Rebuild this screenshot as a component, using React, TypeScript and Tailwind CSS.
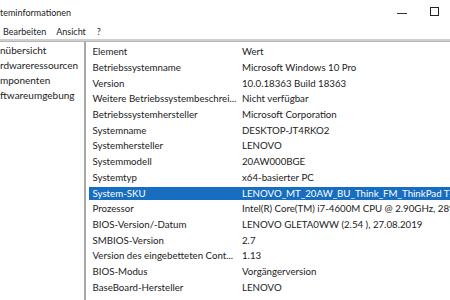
import React from "react";

const rows: [string, string][] = [
  ["Betriebssystemname", "Microsoft Windows 10 Pro"],
  ["Version", "10.0.18363 Build 18363"],
  ["Weitere Betriebssystembeschrei...", "Nicht verfügbar"],
  ["Betriebssystemhersteller", "Microsoft Corporation"],
  ["Systemname", "DESKTOP-JT4RKO2"],
  ["Systemhersteller", "LENOVO"],
  ["Systemmodell", "20AW000BGE"],
  ["Systemtyp", "x64-basierter PC"],
  ["System-SKU", "LENOVO_MT_20AW_BU_Think_FM_ThinkPad T440p"],
  ["Prozessor", "Intel(R) Core(TM) i7-4600M CPU @ 2.90GHz, 2894 MHz"],
  ["BIOS-Version/-Datum", "LENOVO GLETA0WW (2.54 ), 27.08.2019"],
  ["SMBIOS-Version", "2.7"],
  ["Version des eingebetteten Cont...", "1.13"],
  ["BIOS-Modus", "Vorgängerversion"],
  ["BaseBoard-Hersteller", "LENOVO"],
];

export default function App() {
  return (
    <div
      className="w-[450px] h-[300px] overflow-hidden bg-white text-[#222] text-[9.7px] leading-[13px] flex flex-col"
      style={{ fontFamily: 'Lato, "Open Sans", sans-serif' }}
    >
      {/* Title bar */}
      <div className="h-[24px] flex items-center shrink-0 text-[9px]">
        <div className="whitespace-nowrap pt-[1px]">teminformationen</div>
        <div className="flex-1" />
        <div className="w-[10px] h-px bg-[#333] mr-[23px] mt-[2px]" />
        <div className="w-[9px] h-[9px] border border-[#222] mr-[11px] mb-[2px]" />
      </div>
      {/* Menu bar */}
      <div className="h-[15px] flex items-center pl-[3px] shrink-0 text-[9px]">
        <span>Bearbeiten</span>
        <span className="ml-[10px]">Ansicht</span>
        <span className="ml-[11px]">?</span>
      </div>
      {/* Separator */}
      <div className="h-[3px] bg-[#cfcfcf] border-b border-[#b5b5b5] shrink-0" />
      {/* Body */}
      <div className="flex flex-1 min-h-0">
        <div className="w-[84px] shrink-0 flex flex-col pt-[1px] overflow-hidden text-[10px]">
          <div className="h-[15px] flex items-center whitespace-nowrap">nübersicht</div>
          <div className="h-[15px] flex items-center whitespace-nowrap">rdwareressourcen</div>
          <div className="h-[15px] flex items-center whitespace-nowrap">mponenten</div>
          <div className="h-[15px] flex items-center whitespace-nowrap">ftwareumgebung</div>
        </div>
        <div className="w-[2px] bg-[#a8a8a8] shrink-0" />
        <div className="flex-1 min-w-0 pl-[3px] pt-[2px] flex flex-col overflow-hidden">
          <div className="h-[15.7px] flex items-center shrink-0">
            <div className="w-[153px] shrink-0 pl-[3.5px] whitespace-nowrap">Element</div>
            <div className="whitespace-nowrap">Wert</div>
          </div>
          {rows.map(([a, b], i) => {
            const sel = i === 8;
            return (
              <div key={i} className="h-[15.7px] flex items-center shrink-0">
                <div
                  className={
                    sel
                      ? "h-[13px] flex-1 flex items-center bg-[#176dc0] text-white"
                      : "h-[13px] flex-1 flex items-center"
                  }
                >
                  <div className="w-[153px] shrink-0 pl-[3.5px] whitespace-nowrap">{a}</div>
                  <div className="whitespace-nowrap">{b}</div>
                </div>
              </div>
            );
          })}
        </div>
      </div>
    </div>
  );
}
